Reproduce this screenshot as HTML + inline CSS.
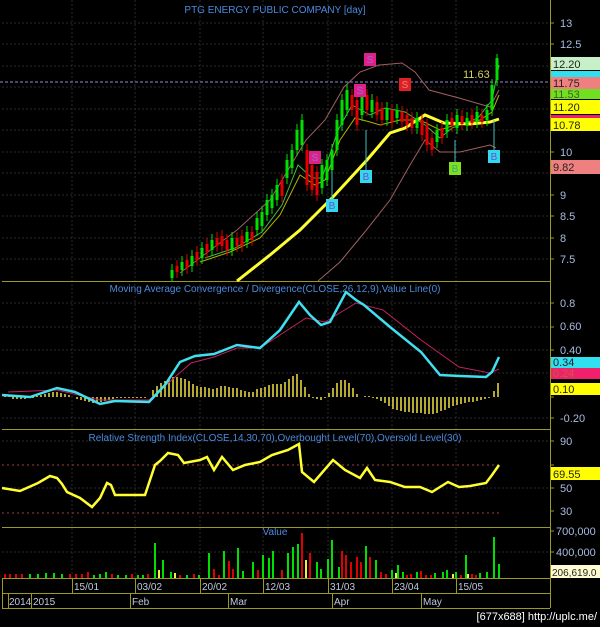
<!DOCTYPE html>
<html><head><style>
body{margin:0;background:#000;width:600px;height:627px;overflow:hidden}
svg{display:block}
text{font-family:"Liberation Sans",sans-serif}
</style></head><body>
<svg width="600" height="627" viewBox="0 0 600 627">
<rect width="600" height="627" fill="#000"/>
<!-- grid -->
<g stroke="#2a2a2a" stroke-width="1" stroke-dasharray="2,2">
<path d="M72 0V578M135 0V578M200 0V578M263 0V578M328 0V578M392 0V578M456 0V578"/>
<path d="M2 23H550M2 44H550M2 66H550M2 87H550M2 109H550M2 130H550M2 152H550M2 173H550M2 195H550M2 216H550M2 238H550M2 259H550"/>
<path d="M2 303H550M2 327H550M2 350H550M2 373H550M2 418H550M2 441H550M2 488H550M2 552H550"/>
</g>
<!-- panel borders -->
<g stroke="#9a9a20" stroke-width="1" fill="none">
<path d="M550.5 0V608"/>
<path d="M2 281.5H550M2 429.5H550M2 527.5H550M2 578.5H550M2 593.5H550M2 608.5H550"/>
<path d="M2.5 578V608M72.5 578V593M135.5 578V593M200.5 578V593M263.5 578V593M328.5 578V593M392.5 578V593M456.5 578V593"/>
<path d="M8.5 593V608M31.5 593V608M130.5 593V608M228.5 593V608M332.5 593V608M421.5 593V608"/>
</g>
<g stroke="#9a9a20"><path d="M550 23h4M550 44h4M550 66h4M550 87h4M550 109h4M550 130h4M550 152h4M550 173h4M550 195h4M550 216h4M550 238h4M550 259h4M550 303h4M550 327h4M550 350h4M550 373h4M550 397h4M550 418h4M550 441h4M550 465h4M550 488h4M550 511h4M550 531h4M550 552h4"/></g>
<!-- axis text -->
<g fill="#a8bce0" font-size="11">
<text x="560" y="27">13</text><text x="560" y="48">12.5</text><text x="560" y="156">10</text><text x="560" y="199">9</text><text x="560" y="220">8.5</text><text x="560" y="242">8</text><text x="560" y="263">7.5</text>
<text x="560" y="307">0.8</text><text x="560" y="330">0.60</text><text x="560" y="354">0.40</text><text x="560" y="422">-0.20</text>
<text x="560" y="445">90</text><text x="560" y="492">50</text><text x="560" y="515">30</text>
<text x="556" y="535">700,000</text><text x="556" y="556">400,000</text>
</g>
<g fill="#4a8ae0" font-size="10" text-anchor="middle">
<text x="275" y="13">PTG ENERGY PUBLIC COMPANY [day]</text>
<text x="275" y="292">Moving Average Convergence / Divergence(CLOSE,26,12,9),Value Line(0)</text>
<text x="275" y="441">Relative Strength Index(CLOSE,14,30,70),Overbought Level(70),Oversold Level(30)</text>
<text x="275" y="535">Value</text>
</g>
<g fill="#c0c8e0" font-size="10">
<text x="74" y="590">15/01</text><text x="137" y="590">03/02</text><text x="202" y="590">20/02</text><text x="265" y="590">12/03</text><text x="330" y="590">31/03</text><text x="394" y="590">23/04</text><text x="458" y="590">15/05</text>
<text x="9" y="605">2014</text><text x="33" y="605">2015</text><text x="132" y="605">Feb</text><text x="230" y="605">Mar</text><text x="334" y="605">Apr</text><text x="423" y="605">May</text>
</g>
<text x="597" y="620" fill="#fff" font-size="11" text-anchor="end" font-family="Liberation Mono,monospace">[677x688] http://uplc.me/</text>
<!-- price -->
<path d="M0 82H550" stroke="#9090d0" stroke-dasharray="3,2"/>
<text x="463" y="78" fill="#d8d060" font-size="11">11.63</text>
<g fill="none" stroke-width="1">
<path d="M180 273L237 230L270 200L306 140L325 120L344 87L360 72L379 65L402 63L415 72L429 90L459 98L490 107L499 90" stroke="#a06060"/>
<path d="M318 281L340 262L364 233L390 200L410 165L425 140L440 152L460 152L490 145L496 148" stroke="#a06060"/>
<path d="M200 262L230 252L260 238L280 215L300 175L315 185L325 180L340 140L355 118L370 122L380 125L400 120L420 120L440 130L455 125L480 120L492 112L499 95" stroke="#b0b000"/>
<path d="M205 258L235 248L262 232L282 205L298 165L312 178L322 178L338 130L352 105L370 115L385 108L405 112L425 125L440 138L452 128L478 118L492 100L499 65" stroke="#40c040"/>
</g>
<path d="M237 281L270 255L300 230L333 197L367 160L390 133L405 128L425 115L444 123L470 124L490 122L499 119" fill="none" stroke="#ffff30" stroke-width="3"/>
<g stroke="#00e000">
<path stroke-width="1" d="M172 264V282M182 256V276M192 250V272M202 242V264M212 234V256M232 232V256M247 226V248M257 212V236M262 206V232M267 194V221M272 189V214M277 179V206M287 154V184M292 144V174M297 124V156M302 114V151M322 159V194M327 154V186M332 144V176M337 114V156M342 94V131M347 84V116M362 89V121M372 94V118M387 102V126M397 104V124M417 112V134M437 124V148M447 114V138M457 109V134M467 112V131M477 106V128M487 104V126M492 79V116M497 54V86"/>
<path stroke-width="3" d="M172 270V278M182 262V270M192 256V266M202 248V258M212 240V250M232 238V250M247 232V242M257 218V230M262 212V226M267 200V215M272 195V208M277 185V200M287 160V178M292 150V168M297 130V150M302 120V145M322 165V188M327 160V180M332 150V170M337 120V150M342 100V125M347 90V110M362 95V115M372 100V112M387 108V120M397 110V118M417 118V128M437 130V142M447 120V132M457 115V128M467 118V125M477 112V122M487 110V120M492 85V110M497 58V80"/>
</g>
<g stroke="#e00000">
<path stroke-width="1" d="M177 260V278M187 254V274M197 246V266M207 238V258M217 232V252M222 230V252M227 234V256M237 232V252M242 230V252M252 226V246M282 174V202M307 144V191M312 159V196M317 166V201M352 89V116M357 94V131M367 89V116M377 96V121M382 102V126M392 104V128M402 106V128M407 109V131M412 112V134M422 114V141M427 119V151M432 132V156M442 122V144M452 112V132M462 110V130M472 109V129M482 109V128"/>
<path stroke-width="3" d="M177 266V272M187 260V268M197 252V260M207 244V252M217 238V246M222 236V246M227 240V250M237 238V246M242 236V246M252 232V240M282 180V196M307 150V185M312 165V190M317 172V195M352 95V110M357 100V125M367 95V110M377 102V115M382 108V120M392 110V122M402 112V122M407 115V125M412 118V128M422 120V135M427 125V145M432 138V150M442 128V138M452 118V126M462 116V124M472 115V123M482 115V122"/>
</g>
<!-- signals -->
<g stroke-width="1">
<path d="M366 130V170M332 170V199M494 120V150M455 140V162" stroke="#40c0c0"/>
</g>
<g font-size="10" text-anchor="middle">
<rect x="364" y="53" width="12" height="13" fill="#e0208a"/><text x="370" y="63" fill="#9070d0">S</text>
<rect x="354" y="84" width="12" height="13" fill="#e0208a"/><text x="360" y="94" fill="#9070d0">S</text>
<rect x="309" y="151" width="12" height="13" fill="#e0208a"/><text x="315" y="161" fill="#9070d0">S</text>
<rect x="399" y="78" width="12" height="13" fill="#e02020"/><text x="405" y="88" fill="#e08080">S</text>
<rect x="360" y="170" width="12" height="13" fill="#30d8f0"/><text x="366" y="180" fill="#7050c0">B</text>
<rect x="326" y="199" width="12" height="13" fill="#30d8f0"/><text x="332" y="209" fill="#7050c0">B</text>
<rect x="488" y="150" width="12" height="13" fill="#30d8f0"/><text x="494" y="160" fill="#7050c0">B</text>
<rect x="449" y="162" width="12" height="13" fill="#80e020"/><text x="455" y="172" fill="#30b070">B</text>
</g>
<!-- right labels -->
<g font-size="11" fill="#222">
<rect x="551" y="57" width="49" height="13" fill="#c8f0c8"/><text x="553" y="68">12.20</text>
<rect x="551" y="71" width="49" height="6" fill="#30e0f0"/>
<rect x="551" y="77" width="49" height="12" fill="#f08080"/><text x="553" y="87">11.75</text>
<rect x="551" y="89" width="49" height="10" fill="#70e020"/><text x="553" y="98" fill="#406020">11.53</text>
<rect x="551" y="100" width="49" height="14" fill="#ffff00"/><text x="553" y="111">11.20</text>
<rect x="551" y="115" width="49" height="3" fill="#f02060"/>
<rect x="551" y="118" width="49" height="13" fill="#ffff00"/><text x="553" y="129">10.78</text>
<rect x="551" y="160" width="49" height="14" fill="#f08080"/><text x="553" y="171">9.82</text>
<rect x="551" y="357" width="49" height="11" fill="#30e0f0"/><text x="553" y="366">0.34</text>
<rect x="551" y="368" width="49" height="11" fill="#f0206a"/><text x="553" y="377" fill="#c06040">0.24</text>
<rect x="551" y="383" width="49" height="12" fill="#ffff00"/><text x="553" y="393">0.10</text>
<rect x="551" y="467" width="49" height="13" fill="#ffff00"/><text x="553" y="478">69.55</text>
<rect x="551" y="565" width="49" height="13" fill="#fffbd0"/><text x="552" y="576" font-size="10">206,619.0</text>
</g>
<!-- MACD -->
<path d="M5 397V395M9 397V395M13 397V399M17 397V399M21 397V399M25 397V399M29 397V398M33 397V398M37 397V396M41 397V395M45 397V394M49 397V393M53 397V392M57 397V392M61 397V393M65 397V394M69 397V395M73 397V397M77 397V399M81 397V400M85 397V401M89 397V402M93 397V403M97 397V403M101 397V402M105 397V401M109 397V400M113 397V399M117 397V398M121 397V398M125 397V398M129 397V398M133 397V398M137 397V398M141 397V398M145 397V398M149 397V397M153 397V390M157 397V386M161 397V383M165 397V381M169 397V379M173 397V377M177 397V377M181 397V378M185 397V379M189 397V381M193 397V384M197 397V386M201 397V387M205 397V387M209 397V388M213 397V389M217 397V388M221 397V386M225 397V386M229 397V387M233 397V388M237 397V388M241 397V390M245 397V391M249 397V392M253 397V392M257 397V389M261 397V388M265 397V387M269 397V385M273 397V384M277 397V384M281 397V384M285 397V382M289 397V379M293 397V376M297 397V374M301 397V380M305 397V387M309 397V394M313 397V398M317 397V399M321 397V400M325 397V398M329 397V393M333 397V388M337 397V383M341 397V380M345 397V380M349 397V383M353 397V388M357 397V394M361 397V397M365 397V396M369 397V396M373 397V398M377 397V399M381 397V401M385 397V403M389 397V406M393 397V409M397 397V410M401 397V411M405 397V412M409 397V412M413 397V413M417 397V413M421 397V413M425 397V414M429 397V414M433 397V414M437 397V413M441 397V411M445 397V410M449 397V408M453 397V406M457 397V405M461 397V404M465 397V403M469 397V402M473 397V402M477 397V401M481 397V400M485 397V399M489 397V398M494 397V391M498 397V383" stroke="#f0e040" stroke-width="1.5"/>
<path d="M8 392L57 390L100 400L149 400L191 363L214 357L237 348L260 348L306 318L325 322L356 303L383 310L421 340L459 367L490 373L499 369" fill="none" stroke="#c02060" stroke-width="1"/>
<path d="M2 395L30 397L57 388L75 392L100 404L115 401L149 402L165 385L180 362L195 356L214 354L237 345L260 348L280 330L299 302L310 315L321 325L330 322L346 292L356 300L364 305L390 327L421 352L440 375L460 376L486 377L492 372L499 357" fill="none" stroke="#40e0f0" stroke-width="2.5"/>
<!-- RSI -->
<path d="M2 465H500M2 513H500" stroke="#a04040" stroke-dasharray="2,3"/>
<path d="M2 488L20 491L38 483L50 476L57 478L62 484L67 492L80 498L92 507L100 498L107 483L111 485L115 495L140 495L145 495L155 465L160 461L168 453L178 455L184 463L200 460L207 457L214 470L222 457L233 470L245 465L260 462L272 455L288 450L299 444L302 472L314 482L333 460L345 470L360 478L367 468L375 480L390 482L405 487L420 487L432 492L448 482L459 487L470 486L486 483L492 475L499 465" fill="none" stroke="#ffff30" stroke-width="2.5"/>
<!-- Volume -->
<path stroke="#00e000" stroke-width="2" d="M30 578V574M38 578V574M46 578V573M54 578V573M62 578V574M94 578V575M100 578V574M106 578V572M118 578V575M126 578V575M138 578V575M143 578V575M155 578V543M163 578V560M171 578V572M187 578V575M199 578V575M209 578V553M224 578V551M238 578V548M243 578V571M253 578V562M263 578V555M269 578V558M273 578V551M288 578V553M293 578V547M298 578V544M317 578V562M321 578V569M328 578V559M332 578V540M339 578V567M366 578V546M376 578V560M392 578V570M398 578V565M403 578V572M417 578V572M435 578V573M443 578V572M447 578V570M456 578V572M466 578V555M480 578V573M487 578V572M494 578V537M499 578V564"/>
<path stroke="#e00000" stroke-width="2" d="M5 578V574M10 578V574M16 578V574M22 578V574M70 578V574M76 578V574M82 578V574M88 578V572M112 578V574M132 578V574M148 578V574M180 578V575M194 578V574M214 578V569M219 578V575M229 578V561M233 578V569M258 578V570M282 578V570M302 578V533M310 578V553M342 578V551M346 578V555M351 578V562M357 578V557M361 578V562M370 578V557M381 578V572M386 578V574M407 578V575M411 578V574M421 578V571M426 578V575M431 578V575M461 578V575M472 578V574M476 578V575"/>
<path stroke="#f0f040" stroke-width="2" d="M159 578V570M175 578V573M306 578V560M396 578V573M453 578V574M468 578V574"/>
</svg>
</body></html>
